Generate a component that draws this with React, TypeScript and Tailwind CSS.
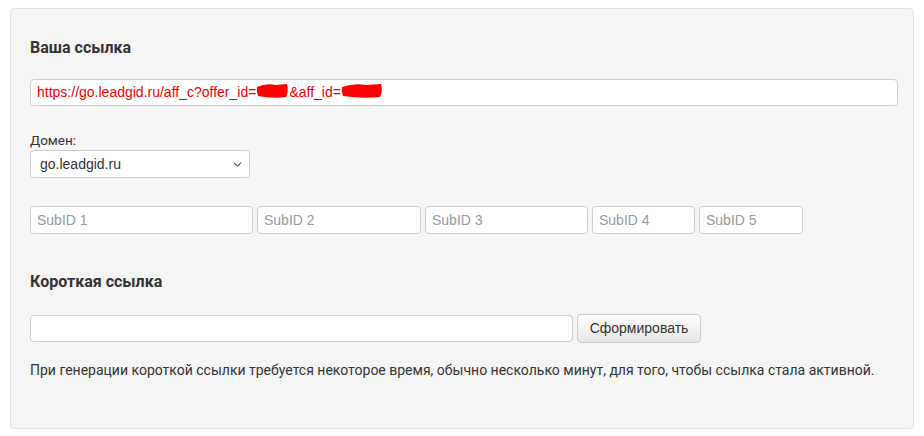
import { ChevronDown } from 'lucide-react'

const subIds = [
  { label: 'SubID 1', w: 'w-[223px]' },
  { label: 'SubID 2', w: 'w-[164px]' },
  { label: 'SubID 3', w: 'w-[163px]' },
  { label: 'SubID 4', w: 'w-[103px]' },
  { label: 'SubID 5', w: 'w-[104px]' },
]

// hand-drawn marker blot used to hide ids
function Blot({ w }: { w: number }) {
  return (
    <svg width={w} height={18} viewBox={`0 0 ${w} 18`} className="inline-block align-middle -mt-[3px]">
      <path
        d={`M1 5 Q${w * 0.3} 1 ${w * 0.6} 3 L${w - 2} 2 Q${w} 9 ${w - 3} 15 Q${w * 0.5} 17 2 14 Q0 9 1 5 Z`}
        fill="#ff0000"
      />
    </svg>
  )
}

export default function App() {
  return (
    <div className="bg-white w-[924px] h-[436px] pt-[8px] pl-[10px] font-['Roboto',sans-serif] text-[#333]">
      <div className="w-[904px] h-[421px] bg-[#f5f5f5] border border-[#e3e3e3] rounded-[4px] pt-[28px] px-[19px]">
        <h3 className="text-[16px] font-bold leading-[22px]">Ваша ссылка</h3>

        <div className="mt-[20px] h-[27px] w-[868px] bg-white border border-[#ccc] rounded-[4px] flex items-center px-[6px] font-['Liberation_Sans',sans-serif] text-[14px] text-[#e00]">
          <span>https://go.leadgid.ru/aff_c?offer_id=</span>
          <Blot w={33} />
          <span>&amp;aff_id=</span>
          <Blot w={42} />
        </div>

        <div className="mt-[25px] text-[13.5px] leading-[18px]">Домен:</div>
        <div className="mt-[1px] h-[28px] w-[220px] bg-white border border-[#ccc] rounded-[4px] flex items-center justify-between pl-[9px] pr-[5px] font-['Liberation_Sans',sans-serif] text-[14px] text-[#333]">
          <span>go.leadgid.ru</span>
          <ChevronDown size={13} strokeWidth={2} className="text-[#555]" />
        </div>

        <div className="mt-[28px] flex gap-[4px]">
          {subIds.map(({ label, w }) => (
            <div
              key={label}
              className={`${w} h-[28px] bg-white border border-[#ccc] rounded-[4px] flex items-center px-[6px] font-['Liberation_Sans',sans-serif] text-[14px] text-[#999]`}
            >
              {label}
            </div>
          ))}
        </div>

        <h3 className="mt-[37px] text-[16px] font-bold leading-[22px]">Короткая ссылка</h3>

        <div className="mt-[21px] flex items-center gap-[4px]">
          <div className="w-[543px] h-[27px] bg-white border border-[#ccc] rounded-[4px]" />
          <button className="h-[29px] w-[124px] border border-[#ccc] rounded-[4px] bg-gradient-to-b from-white to-[#e6e6e6] font-['Liberation_Sans',sans-serif] text-[14px] text-[#333]">
            Сформировать
          </button>
        </div>

        <p className="mt-[17px] text-[14px] leading-[20px]">
          При генерации короткой ссылки требуется некоторое время, обычно несколько минут, для того, чтобы ссылка стала активной.
        </p>
      </div>
    </div>
  )
}
